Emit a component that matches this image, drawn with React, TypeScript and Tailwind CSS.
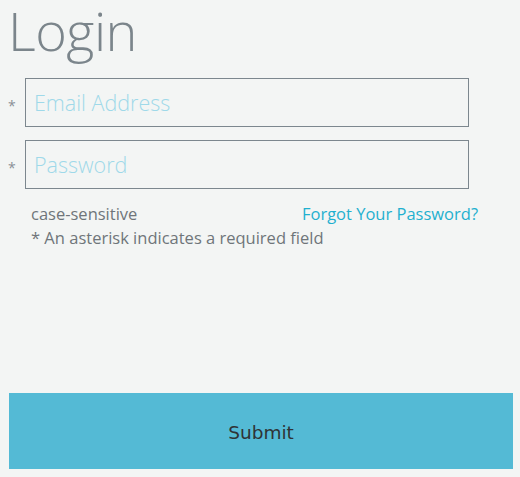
import React from "react";

export default function App() {
  const font = { fontFamily: '"Open Sans", "Noto Sans", sans-serif' };
  return (
    <div className="w-[520px] h-[477px] bg-[#f3f5f4] relative" style={font}>
      <div className="flex flex-col">
        <h1 className="text-[54px] leading-[60px] font-light text-[#7b858b] ml-[8px] h-[60px] tracking-[-0.5px]">Login</h1>
        <div className="flex items-center mt-[18px] h-[49px]">
          <span className="w-[25px] pl-[8px] text-[14px] text-[#8a9096] pt-[6px]">*</span>
          <input
            className="w-[444px] h-[49px] border border-[#7c878e] bg-transparent px-[8px] text-[21.5px] placeholder:text-[#9fd9e9] outline-none font-light"
            placeholder="Email Address"
          />
        </div>
        <div className="flex items-center mt-[13px] h-[49px]">
          <span className="w-[25px] pl-[8px] text-[14px] text-[#8a9096] pt-[6px]">*</span>
          <input
            type="password"
            className="w-[444px] h-[49px] border border-[#7c878e] bg-transparent px-[8px] text-[21.5px] placeholder:text-[#9fd9e9] outline-none font-light"
            placeholder="Password"
          />
        </div>
        <div className="flex justify-between w-[478px] pl-[31px] mt-[14px] text-[16.5px] leading-[22px]">
          <span className="text-[#6f757a]">case-sensitive</span>
          <a className="text-[#1fb0cf]" href="#">Forgot Your Password?</a>
        </div>
        <div className="pl-[31px] text-[16.5px] leading-[24px] mt-[1px] text-[#6f757a]">* An asterisk indicates a required field</div>
        <div className="px-[9px] mt-[143px]">
          <button
            className="w-[504px] h-[76px] bg-[#54bad5] text-[#2f3336] text-[18.5px] pt-[4px]"
            style={{ fontFamily: '"DejaVu Sans", sans-serif' }}
          >
            Submit
          </button>
        </div>
      </div>
    </div>
  );
}
